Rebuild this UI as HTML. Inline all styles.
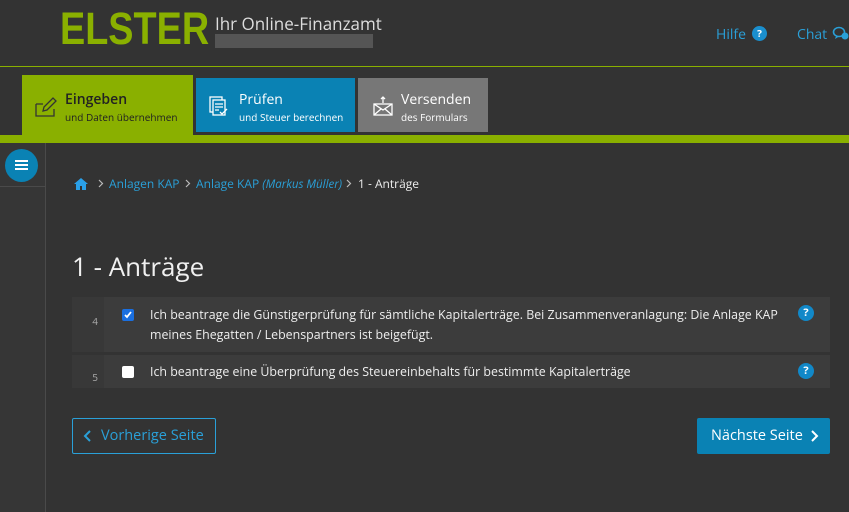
<!DOCTYPE html>
<html><head><meta charset="utf-8"><style>
*{margin:0;padding:0;box-sizing:border-box}
body{width:849px;height:512px;background:#333;font-family:"Open Sans","Liberation Sans","DejaVu Sans",sans-serif;color:#eee;position:relative;overflow:hidden}
.abs{position:absolute}
.logo{left:60px;top:4px;font-size:45px;font-weight:bold;color:#8ab000;font-family:"Liberation Sans",sans-serif;transform:scaleX(0.84);transform-origin:0 0;line-height:50px}
.sub{left:215px;top:12px;font-size:17px;color:#ddd}
.bar{left:215px;top:34px;width:158px;height:14px;background:#555}
.hl{left:0;top:66px;width:849px;height:1px;background:#8ab000}
.tab{position:absolute;color:#fff}
.tab b{display:block;font-weight:normal;font-size:14px}
.tab s{text-decoration:none;display:block;font-size:10px;margin-top:1px}
.green{left:0;top:135px;width:849px;height:8px;background:#8ab000}
.side{left:0;top:143px;width:46px;height:369px;border-right:1px solid #4a4a4a;background:#363636}
.row{position:absolute;left:72px;width:758px;background:#3c3c3c}
.num{position:absolute;left:0;top:0;width:32px;height:100%;background:#383838;font-size:10px;color:#aaa;text-align:right;padding-right:6px}
.cb{position:absolute;left:50px;width:12px;height:12px;border-radius:2px;background:#fff}
.txt{position:absolute;left:78px;font-size:12.4px;line-height:20px;color:#eee;white-space:nowrap}
.q{position:absolute;right:16px;width:16px;height:16px;border-radius:50%;background:#1188c8;color:#fff;font-size:11px;font-weight:bold;text-align:center;line-height:16px}
.bc{position:absolute;top:175px;font-size:12px;color:#2aa0d8;white-space:nowrap}
.ch{position:absolute;top:179px}
</style></head><body>
<div class="abs logo">ELSTER</div>
<div class="abs sub">Ihr Online-Finanzamt</div>
<div class="abs bar"></div>
<div class="abs" style="left:716px;top:25px;font-size:14px;color:#2aa0d8">Hilfe</div>
<div class="abs" style="left:752px;top:26px;width:15px;height:15px;border-radius:50%;background:#1a8fce;color:#fff;font-size:10px;font-weight:bold;text-align:center;line-height:15px">?</div>
<div class="abs" style="left:797px;top:25px;font-size:14px;color:#2aa0d8">Chat</div>
<svg class="abs" style="left:832px;top:25px" width="17" height="17" viewBox="0 0 17 17"><ellipse cx="7" cy="7" rx="5.5" ry="4.5" fill="none" stroke="#2aa0d8" stroke-width="1.6"/><path d="M4 11 L3 14 L7 11.5" fill="#2aa0d8"/><circle cx="13" cy="11" r="3.5" fill="#2aa0d8"/></svg>
<div class="abs hl"></div>
<div class="tab" style="left:22px;top:75px;width:171px;height:60px;background:#8ab000;color:#222">
<svg class="abs" style="left:12px;top:19px" width="24" height="24" viewBox="0 0 24 24" fill="none" stroke="#333" stroke-width="1.3"><path d="M2 10h7M2 10v12h18v-7"/><path d="M9 17l1-4 9-9 3 3-9 9z"/></svg>
<div class="abs" style="left:43px;top:15px"><b style="font-size:14px;font-weight:600">Eingeben</b><s style="color:#222">und Daten übernehmen</s></div></div>
<div class="tab" style="left:196px;top:78px;width:159px;height:54px;background:#0a82b4">
<svg class="abs" style="left:12px;top:17px" width="22" height="22" viewBox="0 0 22 22" fill="none" stroke="#fff" stroke-width="1.3"><rect x="2" y="2" width="12" height="15"/><rect x="5" y="5" width="12" height="15" fill="#0a82b4"/><path d="M7 9h8M7 12h8M7 15h4M12 17l2 2 5-5"/></svg>
<div class="abs" style="left:43px;top:12px"><b>Prüfen</b><s>und Steuer berechnen</s></div></div>
<div class="tab" style="left:358px;top:78px;width:130px;height:54px;background:#777">
<svg class="abs" style="left:14px;top:17px" width="22" height="22" viewBox="0 0 22 22" fill="none" stroke="#fff" stroke-width="1.3"><path d="M11 2v6M9 4l2-2 2 2"/><rect x="2" y="9" width="18" height="11"/><path d="M2 9l9 6 9-6M2 20l7-6M20 20l-7-6"/></svg>
<div class="abs" style="left:43px;top:12px"><b>Versenden</b><s>des Formulars</s></div></div>
<div class="abs green"></div>
<div class="abs side"></div>
<div class="abs" style="left:0;top:186px;width:46px;height:1px;background:#4a4a4a"></div>
<div class="abs" style="left:5px;top:149px;width:33px;height:33px;border-radius:50%;background:#0a82b4"></div>
<div class="abs" style="left:15px;top:160px;width:13px;height:2px;background:#fff;box-shadow:0 4px 0 #fff,0 8px 0 #fff"></div>
<svg class="abs" style="left:74px;top:177px" width="14" height="13" viewBox="0 0 14 13"><path d="M7 1L0 7h2v6h4V9h2v4h4V7h2z" fill="#2aa0e8"/></svg>
<svg class="ch" style="left:98px" width="6" height="9" viewBox="0 0 6 9"><path d="M1 1l3.5 3.5L1 8" stroke="#bbb" stroke-width="1.2" fill="none"/></svg>
<div class="bc" style="left:109px">Anlagen KAP</div>
<svg class="ch" style="left:185px" width="6" height="9" viewBox="0 0 6 9"><path d="M1 1l3.5 3.5L1 8" stroke="#bbb" stroke-width="1.2" fill="none"/></svg>
<div class="bc" style="left:196px">Anlage KAP <i style="font-size:11.5px">(Markus Müller)</i></div>
<svg class="ch" style="left:346px" width="6" height="9" viewBox="0 0 6 9"><path d="M1 1l3.5 3.5L1 8" stroke="#bbb" stroke-width="1.2" fill="none"/></svg>
<div class="bc" style="left:358px;color:#eee">1 - Anträge</div>
<div class="abs" style="left:72px;top:248px;font-size:26px;color:#f0f0f0">1 - Anträge</div>
<div class="row" style="top:297px;height:55px"><div class="num" style="padding-top:17px">4</div><div class="cb" style="top:12px;background:#1a6fe0"><svg width="12" height="12" viewBox="0 0 12 12" style="display:block"><path d="M3 6l2 2 4-5" stroke="#fff" stroke-width="1.8" fill="none"/></svg></div><div class="txt" style="top:8px">Ich beantrage die Günstigerprüfung für sämtliche Kapitalerträge. Bei Zusammenveranlagung: Die Anlage KAP<br>meines Ehegatten / Lebenspartners ist beigefügt.</div><div class="q" style="top:8px">?</div></div>
<div class="row" style="top:355px;height:33px"><div class="num" style="padding-top:15px">5</div><div class="cb" style="top:11px"></div><div class="txt" style="top:7px">Ich beantrage eine Überprüfung des Steuereinbehalts für bestimmte Kapitalerträge</div><div class="q" style="top:8px">?</div></div>
<div class="abs" style="left:72px;top:418px;width:144px;height:36px;border:1px solid #2aa0d8;border-radius:2px;color:#2aa0d8;font-size:14.5px;line-height:34px;padding-left:28px">Vorherige Seite</div>
<svg class="abs" style="left:83px;top:429px" width="10" height="14" viewBox="0 0 10 14"><path d="M7 2L2 7l5 5" stroke="#2aa0d8" stroke-width="2" fill="none"/></svg>
<div class="abs" style="left:697px;top:418px;width:133px;height:36px;background:#0a82b4;border-radius:2px;color:#fff;font-size:14.5px;line-height:36px;padding-left:14px">Nächste Seite</div>
<svg class="abs" style="left:809px;top:429px" width="10" height="14" viewBox="0 0 10 14"><path d="M3 2l5 5-5 5" stroke="#fff" stroke-width="2" fill="none"/></svg>
</body></html>
